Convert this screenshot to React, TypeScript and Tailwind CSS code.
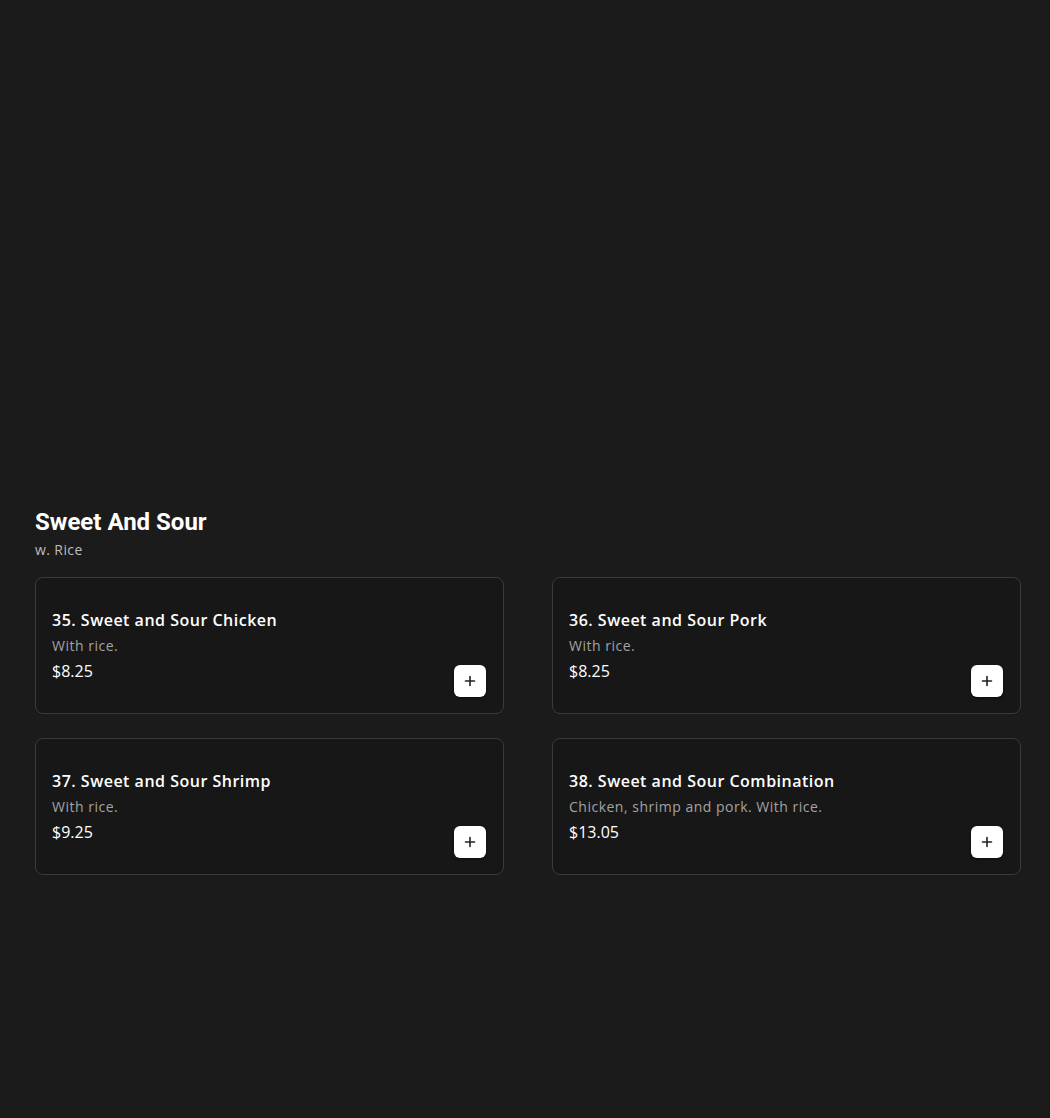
import React from "react";

const items = [
  { name: "35. Sweet and Sour Chicken", desc: "With rice.", price: "$8.25" },
  { name: "36. Sweet and Sour Pork", desc: "With rice.", price: "$8.25" },
  { name: "37. Sweet and Sour Shrimp", desc: "With rice.", price: "$9.25" },
  { name: "38. Sweet and Sour Combination", desc: "Chicken, shrimp and pork. With rice.", price: "$13.05" },
];

function Card({ name, desc, price }: { name: string; desc: string; price: string }) {
  return (
    <div className="flex h-[137px] items-stretch justify-between rounded-lg border border-[#3a3a3a] bg-[#171717] p-4">
      <div className="flex flex-col justify-center">
        <div className="text-[16px] font-semibold leading-6 text-white tracking-[0.5px]">{name}</div>
        <div className="text-[14px] leading-5 text-[#a3a3a3] mt-[4px] tracking-[0.5px]">{desc}</div>
        <div className="text-[16px] leading-6 text-white mt-[3px]">{price}</div>
      </div>
      <button className="self-end mr-[1px] flex h-8 w-8 items-center justify-center rounded-md bg-white shadow-[0_1px_3px_rgba(0,0,0,0.5)]">
        <svg width="12" height="12" viewBox="0 0 12 12" fill="none" stroke="#222" strokeWidth="1.6" strokeLinecap="round">
          <path d="M6 1.5v9M1.5 6h9" />
        </svg>
      </button>
    </div>
  );
}

export default function App() {
  return (
    <div className="min-h-[1118px] bg-[#1b1b1b] pl-[35px] pr-[29px] pt-[506px]" style={{ fontFamily: '"Open Sans", sans-serif' }}>
      <h2 className="text-[24px] font-bold leading-8 text-white" style={{ fontFamily: 'Roboto, "Liberation Sans", sans-serif' }}>
        Sweet And Sour
      </h2>
      <p className="mt-[2px] text-[14px] leading-5 text-[#bdbdbd] tracking-[0.4px]">w. Rice</p>
      <div className="mt-[17px] grid grid-cols-2 gap-x-[48px] gap-y-[24px]">
        {items.map((it) => (
          <Card key={it.name} {...it} />
        ))}
      </div>
    </div>
  );
}
